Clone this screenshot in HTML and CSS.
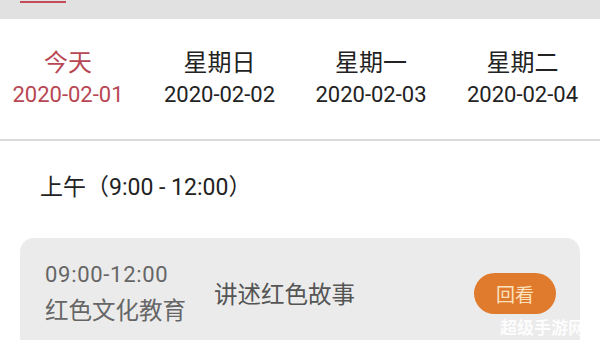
FILE: index.html
```html
<!DOCTYPE html>
<html lang="zh-CN">
<head>
<meta charset="utf-8">
<title>日程</title>
<link rel="stylesheet" href="styles.css">
</head>
<body>
<div class="page">
  <div class="topbar"><div class="tab-indicator"></div></div>
  <div class="days">
    <div class="day active"><div class="day-name">今天</div><div class="day-date">2020-02-01</div></div>
    <div class="day"><div class="day-name">星期日</div><div class="day-date">2020-02-02</div></div>
    <div class="day"><div class="day-name">星期一</div><div class="day-date">2020-02-03</div></div>
    <div class="day"><div class="day-name">星期二</div><div class="day-date">2020-02-04</div></div>
  </div>
  <div class="divider"></div>
  <div class="section-title">上午（9:00 - 12:00）</div>
  <div class="card">
    <div class="card-left">
      <div class="card-time">09:00-12:00</div>
      <div class="card-name">红色文化教育</div>
    </div>
    <div class="card-title">讲述红色故事</div>
    <div class="card-btn">回看</div>
  </div>
  <div class="watermark">超级手游网</div>
</div>
</body>
</html>
```
FILE: styles.css
```css
html, body {
  margin: 0;
  padding: 0;
  background: #ffffff;
}
body {
  font-family: Roboto, "Noto Sans CJK SC", sans-serif;
  color: #222222;
}
.page {
  position: relative;
  width: 600px;
  height: 340px;
  overflow: hidden;
  background: #ffffff;
}
.topbar {
  height: 19px;
  background: #e1e1e1;
  padding-top: 1px;
  box-sizing: border-box;
}
.tab-indicator {
  margin-left: 20px;
  width: 46px;
  height: 2px;
  background: #c24b57;
}
.days {
  height: 120px;
  box-sizing: border-box;
  padding-top: 28px;
  display: grid;
  grid-template-columns: repeat(4, 136px);
  column-gap: 15.5px;
  align-items: start;
}
.day {
  display: flex;
  flex-direction: column;
  align-items: center;
  font-size: 22px;
  line-height: 32px;
  color: #222222;
}
.day-name {
  font-size: 24px;
}
.day.active {
  color: #b84753;
}
.divider {
  height: 2px;
  background: #dadada;
}
.section-title {
  margin-left: 40px;
  padding-top: 32px;
  font-size: 23px;
  line-height: 30px;
  color: #222222;
}
.card {
  margin: 35px 20px 0 20px;
  background: #ebebeb;
  border-radius: 14px;
  padding: 19px 24px 24px 25px;
  display: flex;
  align-items: center;
}
.card-left {
  display: flex;
  flex-direction: column;
  line-height: 36px;
  color: #666666;
}
.card-time {
  font-size: 22px;
  letter-spacing: 0.7px;
}
.card-name {
  font-size: 23.5px;
}
.card-title {
  margin-left: 28px;
  font-size: 23.5px;
  color: #555555;
  flex: 1;
}
.card-btn {
  width: 82px;
  height: 41px;
  border-radius: 21px;
  background: #e07a2c;
  color: #fbe3c0;
  font-size: 19px;
  display: flex;
  align-items: center;
  justify-content: center;
}
.watermark {
  position: absolute;
  left: 500px;
  top: 319px;
  font-size: 17px;
  line-height: 18px;
  font-weight: bold;
  color: #ffffff;
  opacity: 0.9;
}
```
